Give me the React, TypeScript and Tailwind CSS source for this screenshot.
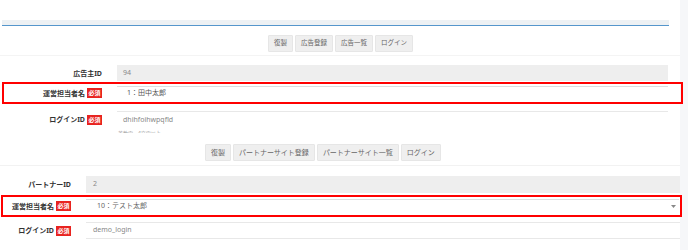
import React from "react";

const font = { fontFamily: '"Noto Sans", "Noto Sans CJK JP", sans-serif' };

function Badge() {
  return (
    <span className="inline-flex h-[10px] w-[15px] items-center justify-center bg-[#e8231f] text-[6px] font-bold leading-none text-white">
      必須
    </span>
  );
}

function Label({ text, req, w }: { text: string; req?: boolean; w: string }) {
  return (
    <div className={`flex shrink-0 items-center justify-end gap-[2px] pr-[15px] ${w}`}>
      <span className="text-[7px] font-bold leading-none text-[#333]">{text}</span>
      {req && <Badge />}
    </div>
  );
}

function Btn({ children, small }: { children: React.ReactNode; small?: boolean }) {
  return (
    <div
      className={`flex h-[17px] items-center rounded-[1px] border border-[#e6e6e6] bg-[#efefef] leading-none text-[#666] ${
        small ? "px-[5px] text-[6.5px]" : "px-[5px] text-[7px]"
      }`}
    >
      {children}
    </div>
  );
}

export default function App() {
  return (
    <div className="h-[250px] w-[688px] overflow-hidden bg-white" style={font}>
      {/* Section 1 */}
      <div className="flex h-[133px] overflow-hidden">
        <div className="relative z-10 w-[680px] shrink-0 pt-[20px]">
          <div className="ml-[2px] h-[6px] w-[667px] border-b border-[#5596cc] bg-[#edf1f4]" />
          <div className="mt-[9px] flex gap-[2px] border-b border-[#f4f4f4] pb-[3px] pl-[268px]">
            <Btn small>復製</Btn>
            <Btn small>広告登録</Btn>
            <Btn small>広告一覧</Btn>
            <Btn small>ログイン</Btn>
          </div>
          <div className="mt-[9px] flex items-center">
            <Label text="広告主ID" w="w-[117px]" />
            <div className="flex h-[16px] w-[551px] items-center bg-[#eeeeee] pl-[6px] text-[7px] text-[#888]">94</div>
          </div>
          <div className="ml-[2px] mt-[1px] flex h-[22px] w-[681px] items-center border-2 border-[#ff0000]">
            <Label text="運営担当者名" req w="w-[113px]" />
            <div className="flex h-[14px] w-[551px] items-center border-t border-[#dedede] bg-white pl-[10px] text-[7px] text-[#555]">
              1：田中太郎
            </div>
          </div>
          <div className="mt-[7px] flex items-center">
            <Label text="ログインID" req w="w-[117px]" />
            <div className="flex h-[17px] w-[551px] items-center border-t border-[#e8e8e8] pl-[6px] text-[7px] text-[#888]">
              dhihfoihwpqfld
            </div>
          </div>
          <div className="ml-[118px] mt-[2px] text-[5px] leading-[6px] text-[#999]">英数字、4文字以上</div>
        </div>
        <div className="w-[8px] shrink-0 bg-[#f6f7f9]" />
      </div>

      {/* Section 2 */}
      <div className="flex h-[117px]">
        <div className="relative z-10 w-[680px] shrink-0 pt-[11px]">
          <div className="flex gap-[2px] border-b border-[#f2f2f2] pb-[4px] pl-[205px]">
            <Btn>復製</Btn>
            <Btn>パートナーサイト登録</Btn>
            <Btn>パートナーサイト一覧</Btn>
            <Btn>ログイン</Btn>
          </div>
          <div className="mt-[10px] flex items-center">
            <Label text="パートナーID" w="w-[86px]" />
            <div className="flex h-[17px] w-[594px] items-center bg-[#eeeeee] pl-[7px] text-[7px] text-[#888]">2</div>
          </div>
          <div className="ml-[1px] mt-[2px] flex h-[22px] w-[681px] items-center border-2 border-[#ff0000]">
            <Label text="運営担当者名" req w="w-[83px]" />
            <div className="flex h-[15px] w-[593px] items-center justify-between border-t border-[#dedede] bg-white pl-[11px] pr-[3px] text-[7px] text-[#666]">
              <span>10：テスト太郎</span>
              <svg width="5" height="4" viewBox="0 0 5 4">
                <path d="M0 0 L5 0 L2.5 3 Z" fill="#888" />
              </svg>
            </div>
          </div>
          <div className="mt-[5px] flex items-center">
            <Label text="ログインID" req w="w-[86px]" />
            <div className="flex h-[17px] w-[594px] items-center border-y border-[#e8e8e8] pl-[7px] text-[7px] text-[#888]">
              demo_login
            </div>
          </div>
        </div>
        <div className="w-[8px] shrink-0 bg-[#f6f7f9]" />
      </div>
    </div>
  );
}
